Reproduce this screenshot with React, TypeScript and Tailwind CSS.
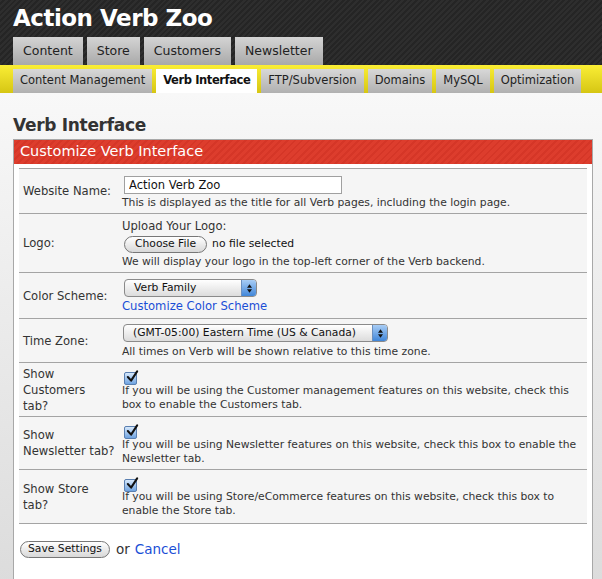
import React from 'react';

const topTabs = ['Content', 'Store', 'Customers', 'Newsletter'];
const subTabs = ['Content Management', 'Verb Interface', 'FTP/Subversion', 'Domains', 'MySQL', 'Optimization'];

function Checkbox() {
  return (
    <span className="relative inline-block w-[13px] h-[13px] rounded-[2px] border border-[#5a7fb0] bg-gradient-to-b from-[#d6e8fb] to-[#6fa3e0]">
      <svg viewBox="0 0 14 14" className="absolute left-[1px] top-[-3px] w-[13px] h-[13px]">
        <path d="M2 7.5 L5.5 11.5 L12 1.5" fill="none" stroke="#111" strokeWidth="2.2" strokeLinecap="round" strokeLinejoin="round" />
      </svg>
    </span>
  );
}

function Select({ label, width }: { label: string; width: string }) {
  return (
    <div className={`flex h-[18px] ${width} rounded-[4px] border border-[#8a8a8a] bg-gradient-to-b from-white to-[#dcdcdc] overflow-hidden`}>
      <span className="flex-1 pl-[9px] text-[10.75px] leading-[16px] text-[#111] whitespace-nowrap">{label}</span>
      <span className="w-[15px] flex flex-col items-center justify-center bg-gradient-to-b from-[#a8cdf5] to-[#3f86d8] border-l border-[#6a8fbf]">
        <svg viewBox="0 0 6 10" className="w-[5px] h-[9px]">
          <path d="M0 4 L3 0 L6 4 Z M0 6 L3 10 L6 6 Z" fill="#111" />
        </svg>
      </span>
    </div>
  );
}

function Row({ label, h, pt, children }: { label: React.ReactNode; h: string; pt: string; children: React.ReactNode }) {
  return (
    <tr className={`border-b border-[#a4a4a4] ${h}`}>
      <td className="w-[103px] pl-[4px] align-middle whitespace-nowrap text-[11.6px] leading-[16px] text-[#333]">{label}</td>
      <td className={`align-top p-0 ${pt}`}>{children}</td>
    </tr>
  );
}

const desc = 'text-[10.75px] leading-[14px] text-[#333]';

export default function App() {
  return (
    <div className="min-h-[579px] w-[602px] flex flex-col bg-[#f7f7f7] font-['DejaVu_Sans',sans-serif] text-[#333]">
      <header className="bg-[repeating-linear-gradient(135deg,#2e2e2e_0px,#2e2e2e_2px,#252525_2px,#252525_4px)]">
        <h1 className="px-[13px] pt-[3px] h-[37px] text-[23px] leading-[30px] font-bold tracking-[-0.5px] text-white">Action Verb Zoo</h1>
        <nav className="flex gap-[4px] px-[13px]">
          {topTabs.map((t) => (
            <div key={t} className="h-[28px] px-[10px] flex items-center bg-gradient-to-b from-[#d4d4d4] to-[#a9a9a9] text-[12.5px] text-[#222]">
              {t}
            </div>
          ))}
        </nav>
      </header>
      <nav className="flex gap-[4px] px-[13px] pt-[4px] bg-gradient-to-b from-[#faee34] to-[#d6c612]">
        {subTabs.map((t) => {
          const active = t === 'Verb Interface';
          return (
            <div
              key={t}
              className={
                active
                  ? 'shrink-0 whitespace-nowrap h-[24px] px-[7px] flex items-center bg-white text-[11.5px] font-bold tracking-[-0.4px] text-[#111]'
                  : 'shrink-0 whitespace-nowrap h-[24px] px-[7px] flex items-center bg-gradient-to-b from-[#d8d8d8] to-[#b0b0b0] text-[11.5px] text-[#222]'
              }
            >
              {t}
            </div>
          );
        })}
      </nav>
      <main className="flex-1 pl-[13px] pr-[9px] pt-[20px] pb-[3px] bg-gradient-to-b from-[#f8f8f8] to-[#dcdcdc]">
        <h2 className="text-[17px] leading-[24px] font-bold tracking-[-0.3px] text-[#333] mb-[2px]">Verb Interface</h2>
        <section className="border border-[#a8a8a8] bg-white">
          <div className="h-[24px] px-[6px] flex items-center bg-[repeating-linear-gradient(135deg,#dd3d2d_0px,#dd3d2d_3px,#d53627_3px,#d53627_5px)] text-[14.5px] text-white">
            Customize Verb Interface
          </div>
          <div className="px-[5px] pt-[4px] pb-[20px]">
            <table className="w-full border-collapse bg-[#f5f5f5] border-t border-[#a4a4a4]">
              <tbody>
                <Row label="Website Name:" h="h-[45px]" pt="pt-[7px]">
                  <input
                    readOnly
                    value="Action Verb Zoo"
                    className="block ml-[2px] w-[218px] h-[18px] border border-[#a0a0a0] bg-white px-[4px] text-[11.5px] text-[#111] outline-none"
                  />
                  <div className={`${desc} mt-[2px]`}>
                    This is displayed as the title for all Verb pages, including the login page.
                  </div>
                </Row>
                <Row label="Logo:" h="h-[59px]" pt="pt-[4px]">
                  <div className="text-[11.6px] leading-[16px]">Upload Your Logo:</div>
                  <div className="flex items-center gap-[5px] mt-[2px]">
                    <span className="ml-[2px] h-[17px] px-[10px] flex items-center rounded-full border border-[#777] bg-gradient-to-b from-white to-[#d8d8d8] text-[10.75px] text-[#111]">
                      Choose File
                    </span>
                    <span className="text-[10.75px] text-[#111]">no file selected</span>
                  </div>
                  <div className={`${desc} mt-[2px]`}>
                    We will display your logo in the top-left corner of the Verb backend.
                  </div>
                </Row>
                <Row label="Color Scheme:" h="h-[46px]" pt="pt-[6px]">
                  <div className="ml-[2px]">
                    <Select label="Verb Family" width="w-[133px]" />
                  </div>
                  <a className="block mt-[1px] text-[11.6px] leading-[16px] text-[#1a4ed6]">Customize Color Scheme</a>
                </Row>
                <Row label="Time Zone:" h="h-[44px]" pt="pt-[5px]">
                  <div className="ml-[1px]">
                    <Select label="(GMT-05:00) Eastern Time (US & Canada)" width="w-[265px]" />
                  </div>
                  <div className={`${desc} mt-[3px]`}>All times on Verb will be shown relative to this time zone.</div>
                </Row>
                <Row label={<>Show<br />Customers<br />tab?</>} h="h-[54px]" pt="pt-[5px]">
                  <div className="ml-[2px] h-[14px]"><Checkbox /></div>
                  <div className={`${desc} mt-[2px] pr-[8px]`}>
                    If you will be using the Customer management features on this website, check this box to enable the Customers tab.
                  </div>
                </Row>
                <Row label={<>Show<br />Newsletter tab?</>} h="h-[53px]" pt="pt-[5px]">
                  <div className="ml-[2px] h-[14px]"><Checkbox /></div>
                  <div className={`${desc} mt-[2px] pr-[8px]`}>
                    If you will be using Newsletter features on this website, check this box to enable the Newsletter tab.
                  </div>
                </Row>
                <Row label={<>Show Store<br />tab?</>} h="h-[54px]" pt="pt-[5px]">
                  <div className="ml-[2px] h-[14px]"><Checkbox /></div>
                  <div className={`${desc} mt-[1px] pr-[8px]`}>
                    If you will be using Store/eCommerce features on this website, check this box to enable the Store tab.
                  </div>
                </Row>
              </tbody>
            </table>
            <div className="flex items-center gap-[6px] mt-[15px] pl-[1px]">
              <span className="h-[17px] px-[7px] flex items-center rounded-full border border-[#777] bg-gradient-to-b from-white to-[#d8d8d8] text-[10.75px] text-[#111]">
                Save Settings
              </span>
              <span className="text-[13.5px] text-[#333]">or</span>
              <a className="text-[13.5px] text-[#1a4ed6] -ml-[1px]">Cancel</a>
            </div>
          </div>
        </section>
      </main>
    </div>
  );
}
